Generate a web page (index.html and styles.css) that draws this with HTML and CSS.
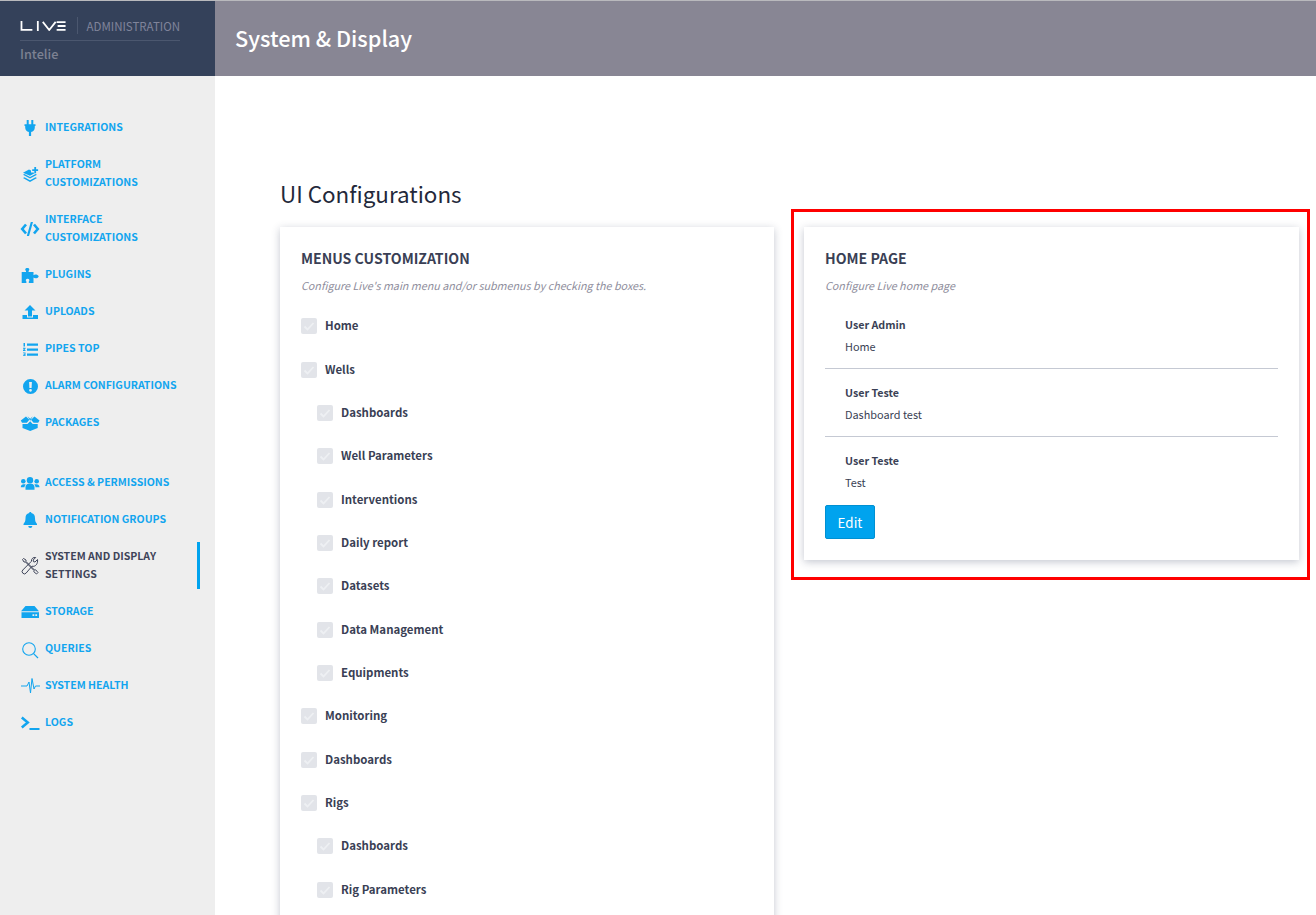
FILE: index.html
```html
<!DOCTYPE html>
<html lang="en">
<head>
  <meta charset="UTF-8" />
  <meta name="viewport" content="width=device-width, initial-scale=1.0"/>
  <title>System &amp; Display</title>
  <link rel="stylesheet" href="styles.css">
</head>
<body>
  <header class="topbar">
    <div class="brand">
      <div class="brand-row">
        <svg class="logo" viewBox="0 0 46 10" width="46" height="10" role="img" aria-label="LIVE">
          <path d="M1.500 0v9h11M18 0v10M23 .8l6.500 8.200L36 .8M37 1h9M38 5h8M37 9h9" fill="none" stroke="#fff" stroke-width="1.800"/>
        </svg>
        <span class="brand-admin">ADMINISTRATION</span>
      </div>
      <div class="brand-org">Intelie</div>
    </div>
    <div class="page-title">System &amp; Display</div>
  </header>

  <div class="layout">
    <!-- Sidebar -->
    <nav class="sidebar">
      <a class="nav-item">
        <svg class="nav-icon" viewBox="0 0 20 20"><path d="M6.700 2h2v4.300h-2zM11.300 2h2v4.300h-2zM4.500 6.300h11V8h-.7v1.500c0 2.500-1.500 4-3.700 4.500v4H8.900v-4c-2.200-.5-3.700-2-3.700-4.500V8h-.7z"/></svg>
        <span>Integrations</span>
      </a>
      <a class="nav-item">
        <svg class="nav-icon" viewBox="0 0 20 20"><path d="M14.300 3h1.800v2.200h2v1.800h-2v2.200h-1.800V7h-2.100V5.200h2.100zM9 5.500l2 1v2h2.500l1 .7L10 11.800 3 8.700zM3 10.800l1.500-.7 5.500 3 5.500-3 1.500.7-7 3.700zM3 14l1.500-.7 5.500 3 5.500-3 1.500.7-7 4z"/></svg>
        <span>Platform<br>Customizations</span>
      </a>
      <a class="nav-item">
        <svg class="nav-icon" viewBox="0 0 20 20"><path d="M6 5.500l-3.800 4.500L6 14.500M14 5.500l3.800 4.500L14 14.500" fill="none" stroke="currentColor" stroke-width="2.600"/><path d="M10.800 3h2.200L9 17H6.800z"/></svg>
        <span>Interface<br>Customizations</span>
      </a>
      <a class="nav-item">
        <svg class="nav-icon" viewBox="0 0 20 20"><path d="M1.700 7H6V5.900C4.800 5 5 3 7.300 3s2.500 2 1.300 2.900V7h4.900v3.300c1-1.200 4.500-1 5.200 1.100-.7 2.100-4.200 2.300-5.200 1.100V18H8.800v-1.400c1.200-1.200.5-2.900-1.200-2.900s-2.400 1.700-1.200 2.900V18H1.700z"/></svg>
        <span>Plugins</span>
      </a>
      <a class="nav-item">
        <svg class="nav-icon" viewBox="0 0 20 20"><path d="M10 3l5.500 5.500H12v6H8v-6H4.500zM2.500 13H7v2.500h6V13h5v4H2.500z"/></svg>
        <span>Uploads</span>
      </a>
      <a class="nav-item">
        <svg class="nav-icon" viewBox="0 0 20 20"><path d="M7 4.500h11v2.200H7zM7 9.500h11v2.200H7zM7 14.500h11v2.200H7zM3.500 4H5v3.500H3.500zM3 8.700h2.500v1L4.300 11h1.200v1H3v-1l1.300-1.300H3zM3 13.500h2.500V17H3v-.8h1.500v-.5h-1v-.7h1v-.7H3z"/></svg>
        <span>Pipes Top</span>
      </a>
      <a class="nav-item">
        <svg class="nav-icon" viewBox="0 0 20 20"><path fill-rule="evenodd" d="M10.500 3a7.500 7.500 0 1 1 0 15 7.500 7.500 0 0 1 0-15zM9.100 6l.3 6h2.200l.3-6zM10.500 12.900a1.400 1.400 0 1 0 0 2.800 1.400 1.400 0 0 0 0-2.800z"/></svg>
        <span>Alarm Configurations</span>
      </a>
      <a class="nav-item">
        <svg class="nav-icon" viewBox="0 0 20 20"><path d="M.800 7.500L6 3.500l3.400 3.200-2.600 3.100L2 9.700zM19.500 7.500L14.500 3.500l-3.500 3.200 2.600 3.100 4.600-.1zM7.500 3.200L10.200 5.700l2.600-2.500-2.600 4.500zM2.500 11l5 .1 2.700-2.900 2.500 2.900 5-.1v4L10.200 18l-7.700-3z"/></svg>
        <span>Packages</span>
      </a>

      <a class="nav-item nav-group-start">
        <svg class="nav-icon" viewBox="0 0 20 20"><g transform="translate(0 .8)"><circle cx="10" cy="6.500" r="3.200"/><circle cx="3.300" cy="7.500" r="2.300"/><circle cx="16.700" cy="7.500" r="2.300"/><path d="M5.500 16v-2.500c0-2 1.500-3.500 3-3.500h3c1.500 0 3 1.500 3 3.500V16zM.8 13.500c0-2 1.200-3 2.800-3H5l.8.5c-1 .8-1.300 1.600-1.300 2.500H.8zM19.500 13.500c0-2-1.200-3-3-3H15l-.8.5c1 .8 1.300 1.600 1.300 2.500h4z"/></g></svg>
        <span>Access &amp; Permissions</span>
      </a>
      <a class="nav-item">
        <svg class="nav-icon" viewBox="0 0 20 20"><path d="M10.300 2c.7 0 1.100.5 1.100 1.100C14 3.700 15 5.700 15 8.200c0 2.800.8 4.300 2 5.700v1H3.500v-1c1.200-1.400 2-2.900 2-5.700 0-2.500 1-4.500 3.700-5.100 0-.6.400-1.100 1.100-1.100zM8.300 16h4c0 1.200-.8 2-2 2s-2-.8-2-2z"/></svg>
        <span>Notification Groups</span>
      </a>
      <a class="nav-item is-active">
        <svg class="nav-icon" viewBox="0 0 20 20"><g fill="none" stroke="currentColor" stroke-width="1"><path d="M3.500 2.500L2.500 3.500 4 6h1.500l8.500 8.500-.2 1.200 2.700 2.300 1.500-1.500-2.300-2.700-1.200.2L6 5.500V4z"/><path d="M17.500 3.500L15 6l-1.500-.3L13.200 4l2.500-2.500c-2.200-.5-4.500 1-4.300 3.800L2.800 14a2.200 2.200 0 0 0 3.200 3.200l6-7c3.300 1 6.200-2.500 5.500-6.700z"/></g></svg>
        <span>System and Display<br>Settings</span>
      </a>
      <a class="nav-item">
        <svg class="nav-icon" viewBox="0 0 20 20"><path fill-rule="evenodd" d="M5.500 4h9l4.500 5.300H1zM1.500 10.300h17.500V16H1.500zM12.500 12.300v1.600h1.800v-1.600zM15.300 12.300v1.600h1.800v-1.600z"/></svg>
        <span>Storage</span>
      </a>
      <a class="nav-item">
        <svg class="nav-icon" viewBox="0 0 20 20"><circle cx="9" cy="10" r="6.300" fill="none" stroke="currentColor" stroke-width="1.100"/><path d="M13.600 14.600L18 19" stroke="currentColor" stroke-width="1.200"/></svg>
        <span>Queries</span>
      </a>
      <a class="nav-item">
        <svg class="nav-icon" viewBox="0 0 20 20"><path d="M1 10h6l2-4 1.500 11L12 2.500l2 10.500 1.500-3H20" fill="none" stroke="currentColor" stroke-width="1"/></svg>
        <span>System Health</span>
      </a>
      <a class="nav-item">
        <svg class="nav-icon" viewBox="0 0 20 20"><path d="M1.800 4.500l6 5-6 5" fill="none" stroke="currentColor" stroke-width="2.500"/><path d="M9.500 15h10v2H9.500z"/></svg>
        <span>Logs</span>
      </a>
    </nav>

    <main class="content">
      <h1>UI Configurations</h1>
      <div class="columns">
        <section class="card">
          <h2>Menus Customization</h2>
          <p class="hint">Configure Live's main menu and/or submenus by checking the boxes.</p>
          <ul class="checks">
            <li><span class="box"><svg viewBox="0 0 16 16"><path d="M3.500 8.500l3 3L12.500 5"/></svg></span>Home</li>
            <li><span class="box"><svg viewBox="0 0 16 16"><path d="M3.500 8.500l3 3L12.500 5"/></svg></span>Wells</li>
            <li class="sub"><span class="box"><svg viewBox="0 0 16 16"><path d="M3.500 8.500l3 3L12.500 5"/></svg></span>Dashboards</li>
            <li class="sub"><span class="box"><svg viewBox="0 0 16 16"><path d="M3.500 8.500l3 3L12.500 5"/></svg></span>Well Parameters</li>
            <li class="sub"><span class="box"><svg viewBox="0 0 16 16"><path d="M3.500 8.500l3 3L12.500 5"/></svg></span>Interventions</li>
            <li class="sub"><span class="box"><svg viewBox="0 0 16 16"><path d="M3.500 8.500l3 3L12.500 5"/></svg></span>Daily report</li>
            <li class="sub"><span class="box"><svg viewBox="0 0 16 16"><path d="M3.500 8.500l3 3L12.500 5"/></svg></span>Datasets</li>
            <li class="sub"><span class="box"><svg viewBox="0 0 16 16"><path d="M3.500 8.500l3 3L12.500 5"/></svg></span>Data Management</li>
            <li class="sub"><span class="box"><svg viewBox="0 0 16 16"><path d="M3.500 8.500l3 3L12.500 5"/></svg></span>Equipments</li>
            <li><span class="box"><svg viewBox="0 0 16 16"><path d="M3.500 8.500l3 3L12.500 5"/></svg></span>Monitoring</li>
            <li><span class="box"><svg viewBox="0 0 16 16"><path d="M3.500 8.500l3 3L12.500 5"/></svg></span>Dashboards</li>
            <li><span class="box"><svg viewBox="0 0 16 16"><path d="M3.500 8.500l3 3L12.500 5"/></svg></span>Rigs</li>
            <li class="sub"><span class="box"><svg viewBox="0 0 16 16"><path d="M3.500 8.500l3 3L12.500 5"/></svg></span>Dashboards</li>
            <li class="sub"><span class="box"><svg viewBox="0 0 16 16"><path d="M3.500 8.500l3 3L12.500 5"/></svg></span>Rig Parameters</li>
          </ul>
        </section>

        <section class="card card-home">
          <div class="highlight"></div>
          <h2>Home Page</h2>
          <p class="hint">Configure Live home page</p>
          <div class="entry">
            <div class="entry-name">User Admin</div>
            <div class="entry-value">Home</div>
          </div>
          <div class="entry">
            <div class="entry-name">User Teste</div>
            <div class="entry-value">Dashboard test</div>
          </div>
          <div class="entry">
            <div class="entry-name">User Teste</div>
            <div class="entry-value">Test</div>
          </div>
          <button class="btn" type="button">Edit</button>
        </section>
      </div>
    </main>
  </div>
</body>
</html>
```

FILE: styles.css
```css
html, body {
  height: 915px;
  overflow: hidden;
}
body {
  margin: 0;
  font-family: "Noto Sans CJK SC", "Noto Sans", sans-serif;
  color: #3a3f55;
  background-color: #fff;
}
.topbar {
  display: flex;
  height: 75px;
  border-top: 1px solid #b9b9bd;
  background-color: #888694;
}
.brand {
  width: 160px;
  padding: 0 35px 0 20px;
  background-color: #34415a;
}
.brand-row {
  display: flex;
  align-items: center;
  height: 40px;
  padding-top: 10px;
  box-sizing: border-box;
  border-bottom: 1px solid #4b576f;
}
.logo {
  margin-right: 11px;
}
.brand-admin {
  height: 17px;
  padding-left: 9px;
  border-left: 1px solid #4b576f;
  font-size: 11.500px;
  line-height: 19px;
  color: #80849a;
}
.brand-org {
  margin-top: 3px;
  font-size: 12.700px;
  font-weight: 500;
  line-height: 20px;
  color: #7d8192;
}
.page-title {
  padding-left: 20px;
  font-size: 21.700px;
  font-weight: 500;
  line-height: 73px;
  color: #fff;
}
.layout {
  display: flex;
  height: 839px;
}
.sidebar {
  flex: 0 0 215px;
  padding-top: 33px;
  background-color: #eee;
  box-sizing: border-box;
}
.nav-item {
  display: flex;
  align-items: center;
  position: relative;
  min-height: 37px;
  padding: 8.500px 15px 10.500px 20px;
  box-sizing: border-box;
  font-size: 10.550px;
  font-weight: 600;
  line-height: 18px;
  text-transform: uppercase;
  color: #12a5ef;
}
.nav-group-start {
  margin-top: 23px;
}
.nav-icon {
  flex: 0 0 20px;
  width: 20px;
  height: 20px;
  margin: 0 5px -2px 0;
  fill: currentColor;
}
.is-active {
  color: #3e4459;
}
.is-active::after {
  content: "";
  position: absolute;
  top: 4px;
  right: 15px;
  bottom: 4px;
  width: 3px;
  background-color: #00a3ee;
}
.content {
  flex: 1;
  padding: 101px 17px 0 65px;
}
h1 {
  margin: 0 0 18px;
  font-size: 22.400px;
  font-weight: 400;
  line-height: 32px;
  color: #23283a;
}
.columns {
  display: grid;
  grid-template-columns: 494px 495px;
  gap: 30px;
  align-items: start;
}
.card {
  position: relative;
  padding: 21px;
  background-color: #fff;
  box-shadow: 0 2px 8px rgba(60, 70, 100, 0.3);
}
h2 {
  margin: 0;
  font-size: 14.100px;
  font-weight: 600;
  line-height: 20px;
  text-transform: uppercase;
  color: #3a3f55;
}
.hint {
  margin: 9px 0 0;
  font-size: 10.750px;
  font-style: italic;
  line-height: 18px;
  color: #8e8d9c;
}
.checks {
  list-style: none;
  margin: 8.600px 0 0;
  padding: 0 0 40px;
}
.checks li {
  display: flex;
  align-items: center;
  height: 43.330px;
  font-size: 11.450px;
  font-weight: 600;
  color: #3a3f55;
}
.checks .sub {
  padding-left: 16px;
}
.box {
  display: block;
  width: 16px;
  height: 16px;
  margin-top: 2px;
  margin-right: 8px;
  border-radius: 2px;
  background-color: #e2e4e9;
}
.box svg {
  display: block;
  fill: none;
  stroke: #eef0f3;
  stroke-width: 1.800;
}
.card-home h2 + .hint {
  margin-bottom: 18px;
}
.entry {
  padding: 0 20px 11px;
  margin-bottom: 12px;
  border-bottom: 1px solid #c5c9d3;
  line-height: 22px;
}
.entry:last-of-type {
  margin-bottom: 12px;
  padding-bottom: 0;
  border-bottom: 0;
}
.entry-name {
  padding-top: 1px;
  font-size: 10.700px;
  font-weight: 600;
  line-height: 21px;
}
.entry-value {
  font-size: 10.900px;
}
.btn {
  display: block;
  width: 50px;
  height: 34px;
  padding: 0;
  border: 1px solid #0090d2;
  border-radius: 2px;
  background-color: #00a3ee;
  font-family: inherit;
  font-size: 13.400px;
  color: #fff;
}
.highlight {
  position: absolute;
  top: -18px;
  left: -13px;
  right: -11px;
  bottom: -20px;
  border: 3px solid #f00;
}
```
